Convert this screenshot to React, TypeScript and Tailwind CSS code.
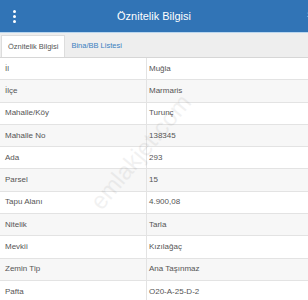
const rows: [string, string][] = [
  ["İl", "Muğla"],
  ["İlçe", "Marmaris"],
  ["Mahalle/Köy", "Turunç"],
  ["Mahalle No", "138345"],
  ["Ada", "293"],
  ["Parsel", "15"],
  ["Tapu Alanı", "4.900,08"],
  ["Nitelik", "Tarla"],
  ["Mevkii", "Kızılağaç"],
  ["Zemin Tip", "Ana Taşınmaz"],
  ["Pafta", "O20-A-25-D-2"],
];

export default function App() {
  return (
    <div className="relative w-[308px] h-[300px] overflow-hidden bg-white font-['Liberation_Sans',Arial,sans-serif]">
      {/* header */}
      <div className="h-[32px] bg-[#3174b6] flex items-center relative">
        <div className="w-[28px] flex flex-col items-center gap-[2px]">
          <span className="w-[3px] h-[3px] rounded-full bg-white" />
          <span className="w-[3px] h-[3px] rounded-full bg-white" />
          <span className="w-[3px] h-[3px] rounded-full bg-white" />
        </div>
        <div className="flex-1 text-center text-white text-[11px] pr-[28px]">Öznitelik Bilgisi</div>
        <span className="absolute right-[-2px] top-[10px] text-[#b8cde3] text-[10px] leading-none">›</span>
      </div>
      <div className="h-[1px] bg-[#b9d6ef]" />

      {/* tabs */}
      <div className="h-[25px] bg-[#eeeeee] border-b border-[#d6d6d6] flex items-end pl-[1px]">
        <div className="h-[22px] px-[6px] bg-white border border-b-0 border-[#dddddd] flex items-center text-[7.5px] text-[#555]">
          Öznitelik Bilgisi
        </div>
        <div className="h-[22px] px-[6px] flex items-center text-[7.5px] text-[#3a7fc0]">Bina/BB Listesi</div>
      </div>

      {/* table */}
      <div className="flex flex-col">
        {rows.map(([k, v], i) => (
          <div
            key={k}
            className={`h-[22.3px] flex border-b border-[#e3e3e3] text-[8px] text-[#555] ${i % 2 === 1 ? "bg-[#f7f7f7]" : "bg-white"}`}
          >
            <div className="w-[147px] border-r border-[#e3e3e3] flex items-center pl-[5px]">{k}</div>
            <div className="flex-1 flex items-center pl-[2px]">{v}</div>
          </div>
        ))}
      </div>

      {/* watermark */}
      <div className="absolute left-[70px] top-[134px] -rotate-[50deg] text-[24px] text-[#000] opacity-[0.05] pointer-events-none">
        emlakjet.com
      </div>
    </div>
  );
}
